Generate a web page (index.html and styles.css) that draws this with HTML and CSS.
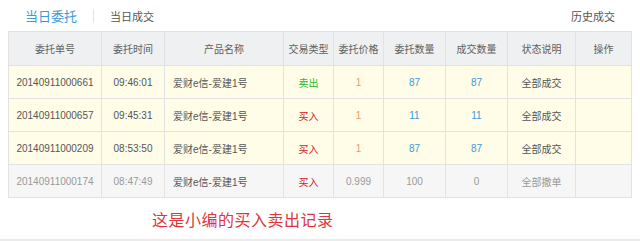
FILE: index.html
```html
<!DOCTYPE html>
<html>
<head>
<meta charset="utf-8">
<link rel="stylesheet" href="styles.css">
</head>
<body>
<div class="page">
  <div class="tabs">
    <span class="tab active">当日委托</span>
    <span class="sep"></span>
    <span class="tab">当日成交</span>
    <span class="history">历史成交</span>
  </div>
  <table class="orders">
    <colgroup>
      <col class="c1"><col class="c2"><col class="c3"><col class="c4"><col class="c5"><col class="c6"><col class="c7"><col class="c8"><col class="c9">
    </colgroup>
    <thead>
      <tr><th>委托单号</th><th>委托时间</th><th>产品名称</th><th>交易类型</th><th>委托价格</th><th>委托数量</th><th>成交数量</th><th>状态说明</th><th>操作</th></tr>
    </thead>
    <tbody>
      <tr class="done"><td>20140911000661</td><td>09:46:01</td><td class="name">爱财e信-爱建1号</td><td class="sell">卖出</td><td class="price">1</td><td class="num">87</td><td class="num">87</td><td>全部成交</td><td></td></tr>
      <tr class="done"><td>20140911000657</td><td>09:45:31</td><td class="name">爱财e信-爱建1号</td><td class="buy">买入</td><td class="price">1</td><td class="num">11</td><td class="num">11</td><td>全部成交</td><td></td></tr>
      <tr class="done"><td>20140911000209</td><td>08:53:50</td><td class="name">爱财e信-爱建1号</td><td class="buy">买入</td><td class="price">1</td><td class="num">87</td><td class="num">87</td><td>全部成交</td><td></td></tr>
      <tr class="cancel"><td>20140911000174</td><td>08:47:49</td><td class="name">爱财e信-爱建1号</td><td class="buy">买入</td><td>0.999</td><td>100</td><td>0</td><td>全部撤单</td><td></td></tr>
    </tbody>
  </table>
  <div class="caption">这是小编的买入卖出记录</div>
</div>
<div class="band"></div>
</body>
</html>
```
FILE: styles.css
```css
html, body {
  margin: 0;
  padding: 0;
  background: #fff;
  font-family: "Liberation Sans", "Noto Sans CJK SC", sans-serif;
}
.page {
  padding: 0 9px 0 8px;
}
.tabs {
  height: 31px;
  display: flex;
  align-items: center;
  padding-left: 17px;
  padding-right: 16px;
}
.tab {
  font-size: 11px;
  color: #555;
}
.tab.active {
  font-size: 13px;
  color: #3d9ad8;
}
.sep {
  width: 1px;
  height: 14px;
  background: #e2e2e2;
  margin: 0 16px 0 16px;
}
.history {
  margin-left: auto;
  font-size: 11px;
  color: #555;
}
.orders {
  width: 623px;
  border-collapse: collapse;
  table-layout: fixed;
  font-size: 10px;
}
.c1 { width: 93px; }
.c2 { width: 63px; }
.c3 { width: 119px; }
.c4 { width: 50px; }
.c5 { width: 50px; }
.c6 { width: 62px; }
.c7 { width: 62px; }
.c8 { width: 68px; }
.c9 { width: 56px; }
.orders th, .orders td {
  border: 1px solid #e2e2e2;
  text-align: center;
  padding: 0;
  white-space: nowrap;
}
.orders th {
  height: 33px;
  background: #eef0f2;
  font-weight: normal;
  color: #606060;
}
.orders td {
  height: 32px;
  color: #555;
}
.orders td.name {
  text-align: left;
  padding-left: 8px;
}
tr.done td {
  background: #fffde8;
}
tr.cancel td {
  background: #f6f6f6;
  color: #999;
}
tr.cancel td.name {
  color: #555;
}
.orders td.sell { color: #2db82d; }
.orders td.buy { color: #d42020; }
.orders td.price { color: #ef9a6a; }
.orders td.num { color: #3d9ad8; }
.caption {
  height: 41px;
  display: flex;
  align-items: center;
  padding-left: 144px;
  font-family: "Noto Sans CJK SC", sans-serif;
  font-size: 16px;
  letter-spacing: 0.5px;
  color: #e0353a;
}
.band {
  height: 3px;
  background: #ebebeb;
}
```
